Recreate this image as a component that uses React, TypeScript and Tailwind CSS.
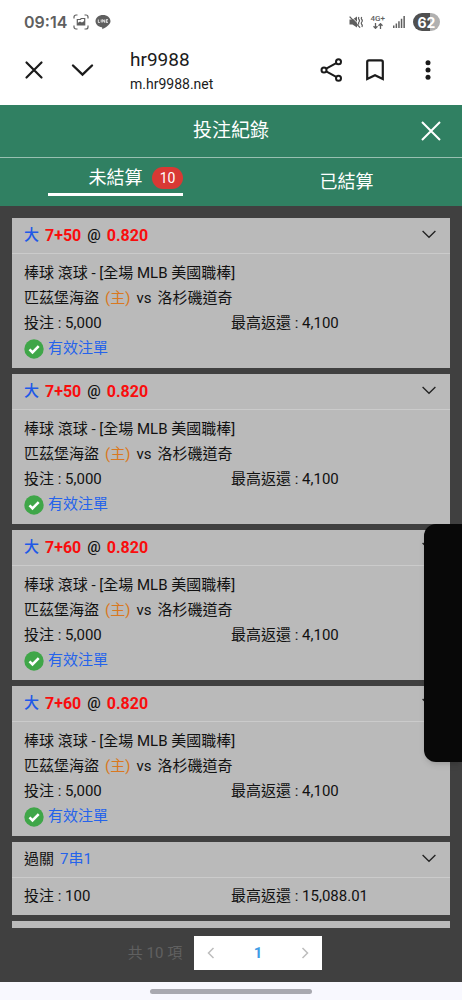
import React from "react";

type Bet = {
  kind: "single" | "parlay";
  title?: string;
  line?: string;
  stake?: string;
  payout?: string;
};

const bets: Bet[] = [
  { kind: "single", line: "7+50", stake: "5,000", payout: "4,100" },
  { kind: "single", line: "7+50", stake: "5,000", payout: "4,100" },
  { kind: "single", line: "7+60", stake: "5,000", payout: "4,100" },
  { kind: "single", line: "7+60", stake: "5,000", payout: "4,100" },
  { kind: "parlay", title: "7串1", stake: "100", payout: "15,088.01" },
];

function StatusBar() {
  return (
    <div className="flex h-11 shrink-0 items-center justify-between pr-6 pl-6 text-[#5f5f5f]">
      <div className="flex items-center gap-1.5">
        <span className="font-['Inter','Liberation_Sans',sans-serif] text-[16px] font-semibold">09:14</span>
        <svg className="size-4" viewBox="0 0 16 16" fill="none" stroke="currentColor" strokeWidth="1.2" aria-hidden="true">
          <path d="M1 4.500V3a2 2 0 0 1 2-2h1.500M11.500 1H13a2 2 0 0 1 2 2v1.500M15 11.500V13a2 2 0 0 1-2 2h-1.500M4.500 15H3a2 2 0 0 1-2-2v-1.500" />
          <path d="M4.300 5.500h3l1-1h3.400v6.500H4.300z" />
          <path d="M4.500 11V9l2.500-1.500 2 1 2.700-2V11z" fill="currentColor" stroke="none" />
        </svg>
        <svg className="h-4 w-4" viewBox="0 0 16 16" aria-hidden="true">
          <path d="M8 1C3.800 1 .500 3.700.500 7.200c0 3 2.600 5.400 6.300 6 .700.200.500.900.400 2 1.500-.700 8.300-4 8.300-8C15.500 3.700 12.200 1 8 1z" fill="currentColor" />
          <path d="M3.300 5.500v3h1.500M6.200 5.500v3M7.700 8.500v-3l2 3v-3M12.900 5.500h-1.600v3h1.600M11.300 7h1.400" stroke="white" strokeWidth=".8" fill="none" />
        </svg>
      </div>
      <div className="flex items-center gap-2">
        <svg className="h-3 w-3.5" viewBox="0 0 14 12" fill="none" stroke="currentColor" strokeWidth="1.300" aria-hidden="true">
          <path d="M.500 3.500h3L8 .500v11L3.500 8.500h-3z" fill="currentColor" stroke="none" />
          <path d="M1.800.200l10.500 10.500" stroke="white" strokeWidth="1" />
          <path d="M.600.600l10.500 11" />
          <path d="M10 1q-1 1.300 0 2.500t0 2.500 0 2.500M12.800 1q-1 1.300 0 2.500t0 2.500 0 2.500 0 2.500" strokeWidth="1.200" />
        </svg>
        <div className="flex flex-col items-center">
          <span className="text-[8px] leading-[8px] font-medium">4G+</span>
          <svg className="h-1.5 w-2.5" viewBox="0 0 10 6" fill="none" stroke="currentColor" strokeWidth="1.300" aria-hidden="true">
            <path d="M2.500 0v5.400M.500 3.300l2 2 2-2M7.500 6V.600M5.500 2.700l2-2 2 2" />
          </svg>
        </div>
        <svg className="h-3 w-3" viewBox="0 0 12 12" fill="currentColor" aria-hidden="true">
          <path d="M0 9.500h1.500V12H0zM2.600 7.500h1.500V12H2.600zM5.200 5.200h1.500V12H5.200zM7.800 2.800h1.500V12H7.800zM10.400 0h1.500v12h-1.500z" />
        </svg>
        <span className="-mr-0.5 flex h-[18px] w-[27px] items-center justify-center rounded-full bg-linear-to-r from-[#505050] from-62% to-[#b0b0b0] to-62% font-['Inter','Liberation_Sans',sans-serif] text-[14px] font-bold text-white">
          62
        </span>
      </div>
    </div>
  );
}

function BrowserBar() {
  return (
    <div className="flex h-[61px] shrink-0 items-center pb-2.5 pl-[22px] text-[#1b1b1b]">
      <button type="button" aria-label="關閉分頁" className="p-0.5">
        <svg className="size-5" viewBox="0 0 20 20" fill="none" stroke="currentColor" strokeWidth="2.200" strokeLinecap="round">
          <path d="M2.500 2.500l15 15M17.500 2.500l-15 15" />
        </svg>
      </button>
      <button type="button" aria-label="縮小" className="ml-6">
        <svg className="h-6 w-6" viewBox="0 0 24 24" fill="none" stroke="currentColor" strokeWidth="2.400" strokeLinecap="round">
          <path d="M3 7.500l9.500 9 9.500-9" />
        </svg>
      </button>
      <div className="ml-9 min-w-0 flex-1 pt-1">
        <div className="text-[19px] leading-6">hr9988</div>
        <div className="text-[14px] leading-6">m.hr9988.net</div>
      </div>
      <button type="button" aria-label="分享">
        <svg className="size-6" viewBox="0 0 24 24" fill="none" stroke="currentColor" strokeWidth="2">
          <circle cx="5" cy="12" r="2.500" />
          <circle cx="19.500" cy="3.800" r="2.500" />
          <circle cx="19.500" cy="20.200" r="2.500" />
          <path d="M7.200 10.700l10-5.600M7.200 13.300l10 5.600" />
        </svg>
      </button>
      <button type="button" aria-label="書籤" className="ml-5">
        <svg className="size-6" viewBox="0 0 24 24" fill="none" stroke="currentColor" strokeWidth="2.200">
          <path d="M4.200 21V4Q4.200 2.300 5.900 2.300H18.100Q19.800 2.300 19.800 4V21L12 17.300z" />
        </svg>
      </button>
      <button type="button" aria-label="更多" className="mr-[22px] ml-[29px]">
        <svg className="size-6" viewBox="0 0 24 24" fill="currentColor">
          <circle cx="12" cy="4.800" r="2.500" />
          <circle cx="12" cy="12" r="2.500" />
          <circle cx="12" cy="19.200" r="2.500" />
        </svg>
      </button>
    </div>
  );
}

function Header() {
  return (
    <header className="shrink-0 bg-[#308062] text-white">
      <div className="grid h-[53px] grid-cols-[1fr_auto_1fr] items-center border-b border-[#98c0b1] px-5">
        <h1 className="col-start-2 text-[19px]">投注紀錄</h1>
        <button type="button" aria-label="關閉" className="justify-self-end">
          <svg className="size-[22px]" viewBox="0 0 22 22" fill="none" stroke="currentColor" strokeWidth="2">
            <path d="M2 2l18 18M20 2L2 20" />
          </svg>
        </button>
      </div>
      <nav className="grid h-12 grid-cols-2 justify-items-center text-[18px]">
        <button type="button" className="relative flex h-[38px] w-[135px] items-center justify-center border-b-[3px] border-white pt-1">
          未結算
          <span className="absolute top-[9px] right-0 flex h-[22px] w-[31px] items-center justify-center rounded-full bg-[#d93934] text-[14px]">10</span>
        </button>
        <button type="button" className="px-6 pb-0.5">已結算</button>
      </nav>
    </header>
  );
}

function CardHeader({ children }: { children?: React.ReactNode }) {
  return (
    <div className="flex h-9 items-center justify-between border-b border-[#cbcbcb] pr-3.5 pl-3">
      <div className="flex items-center gap-1.5">{children}</div>
      <button type="button" aria-label="展開" className="pb-1">
        <svg className="h-3 w-3.5" viewBox="0 0 14 12" fill="none" stroke="#222222" strokeWidth="1.300">
          <path d="M.600 3L7 9.300 13.400 3" />
        </svg>
      </button>
    </div>
  );
}

function Amounts({ stake, payout }: { stake?: string; payout?: string }) {
  return (
    <div className="grid grid-cols-2">
      <div className="pl-3">投注 : {stake}</div>
      <div>最高返還 : {payout}</div>
    </div>
  );
}

function BetCard({ bet }: { bet: Bet }) {
  if (bet.kind === "parlay") {
    return (
      <article className="shrink-0 bg-[#bababa] leading-[25px]">
        <CardHeader>
          <span>過關</span>
          <span className="text-[#2563eb]">{bet.title}</span>
        </CardHeader>
        <div className="py-1.5">
          <Amounts stake={bet.stake} payout={bet.payout} />
        </div>
      </article>
    );
  }
  return (
    <article className="shrink-0 bg-[#bababa] leading-[25px]">
      <CardHeader>
        <span className="font-medium text-[#2059e8]">大</span>
        <span className="text-[16px] font-bold text-[#f90d0d]">{bet.line}</span>
        <span className="font-medium">@</span>
        <span className="text-[16px] font-bold text-[#f90d0d]">0.820</span>
      </CardHeader>
      <div className="py-[7px]">
        <div className="pl-3">棒球 滾球 - [全場 MLB 美國職棒]</div>
        <div className="flex gap-1.5 pl-3">
          <span>匹茲堡海盜</span>
          <span className="text-[#d97821]">(主)</span>
          <span>vs</span>
          <span>洛杉磯道奇</span>
        </div>
        <Amounts stake={bet.stake} payout={bet.payout} />
        <div className="flex items-center gap-1 pl-3 text-[#2563eb]">
          <svg className="size-5" viewBox="0 0 20 20" aria-hidden="true">
            <circle cx="10" cy="10" r="9.700" fill="#3fa648" />
            <path d="M5.500 10.300l3 3 6.200-6.200" fill="none" stroke="white" strokeWidth="2.600" />
          </svg>
          <span>有效注單</span>
        </div>
      </div>
    </article>
  );
}

function Pagination() {
  return (
    <footer className="flex h-[54px] shrink-0 items-center justify-center gap-3 pr-3 pb-1">
      <span className="text-[#606060]">共 10 項</span>
      <div className="flex h-[34px] w-32 items-center justify-between bg-white px-3">
        <button type="button" aria-label="上一頁">
          <svg className="h-3 w-2.5" viewBox="0 0 10 12" fill="none" stroke="#bdbdbd" strokeWidth="1.500">
            <path d="M7.500 1L2.500 6l5 5" />
          </svg>
        </button>
        <button type="button" aria-current="page" className="font-bold text-[#409be5]">1</button>
        <button type="button" aria-label="下一頁">
          <svg className="h-3 w-2.5" viewBox="0 0 10 12" fill="none" stroke="#bdbdbd" strokeWidth="1.500">
            <path d="M2.500 1l5 5-5 5" />
          </svg>
        </button>
      </div>
    </footer>
  );
}

export default function App() {
  return (
    <div className="relative flex h-dvh flex-col bg-white font-['Roboto','Noto_Sans_CJK_TC',sans-serif] text-[15px] text-[#111111]">
      <StatusBar />
      <BrowserBar />
      <Header />
      <main className="flex min-h-0 flex-1 flex-col bg-[#404040]">
        <div className="mt-3 flex min-h-0 flex-1 flex-col gap-1.5 overflow-y-auto px-3 [scrollbar-width:none]">
          {bets.map((bet, i) => (
            <BetCard key={i} bet={bet} />
          ))}
          <article className="shrink-0 bg-[#bababa]">
            <CardHeader />
          </article>
        </div>
        <Pagination />
      </main>
      <div className="flex h-[18px] shrink-0 items-center justify-center bg-[#f8f8fe]">
        <div className="h-[5px] w-[162px] rounded-full bg-[#a9a9b0]" />
      </div>
      <aside className="absolute top-[524px] right-0 h-[238px] w-[38px] rounded-l-xl bg-[#080808] shadow-md" />
    </div>
  );
}
